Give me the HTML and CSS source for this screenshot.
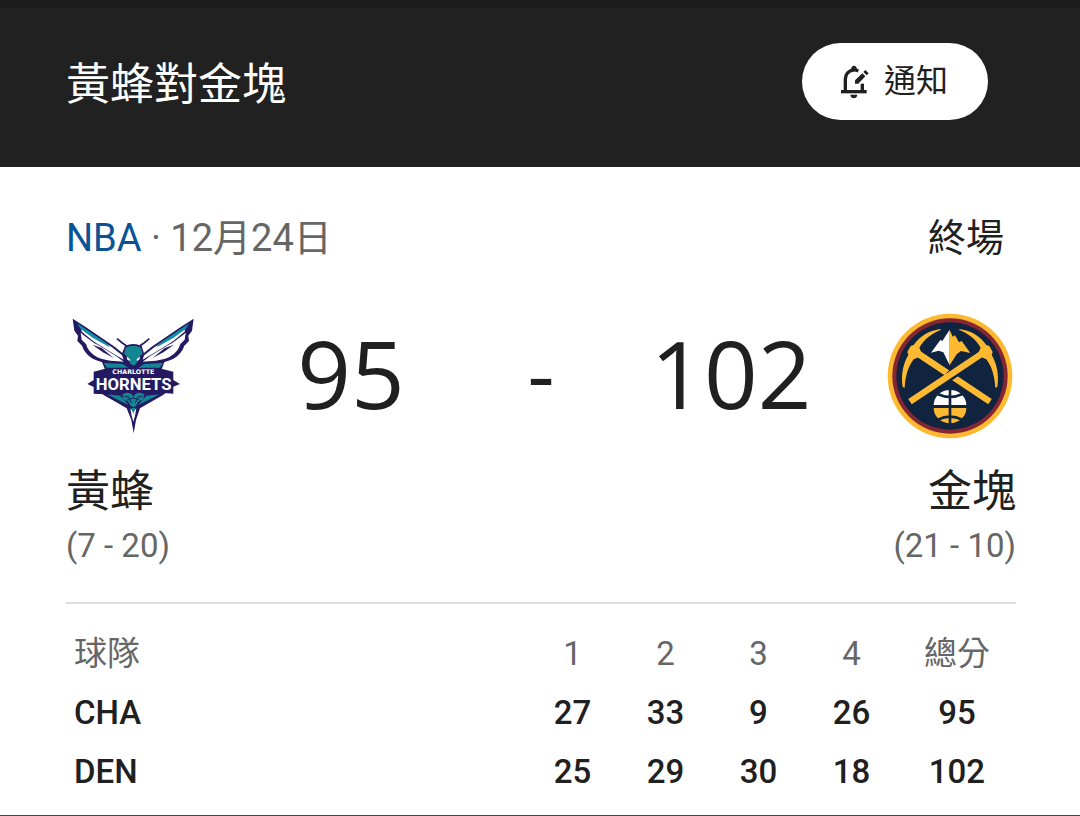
FILE: index.html
```html
<!DOCTYPE html>
<html lang="zh-Hant">
<head>
  <meta charset="UTF-8" />
  <meta name="viewport" content="width=device-width, initial-scale=1.0" />
  <title>黃蜂對金塊</title>
  <link rel="stylesheet" href="styles.css">
</head>
<body>
  <header class="top-bar">
    <h1>黃蜂對金塊</h1>
    <button class="notify-button" type="button">
      <svg class="bell" viewBox="150 105 87 102" aria-hidden="true">
        <g fill="none" stroke="#202020" stroke-width="10">
          <path d="M153 185H230" />
          <path d="M166 184V148C166 132 176 122 190 120C196 119 200 121 205 123" />
          <path d="M217 184V161" />
        </g>
        <path d="M183 119C183 103 201 103 201 119ZM181 194H202C201 208 182 208 181 194Z" fill="#202020" />
        <path d="M195 161V151L217 130L226 139L205 161ZM220 126L226 120L236 130L230 136Z" fill="#202020" />
      </svg>
      通知
    </button>
  </header>

  <main class="game">
    <div class="game-info">
      <p class="league"><a href="#">NBA</a> · 12月24日</p>
      <p class="status">終場</p>
    </div>

    <div class="match">
      <div class="logo">
        <svg class="hornets" viewBox="30 30 369 363" role="img" aria-label="黃蜂">
          <!-- wings -->
          <g id="wing">
            <path d="M35 38L75 64L162 123L198 152L200 178L150 173C106 168 74 153 63 119L49 105L51 89L40 74Z" fill="#241a62" />
            <path d="M59 80L68 84L110 116L165 150L188 167L148 164C107 159 84 143 75 114L62 101Z" fill="#fff" />
            <path d="M60 62L92 86L152 123L190 153L188 161L150 139L92 103L62 77Z" fill="#fff" />
            <path d="M48 52L84 76L140 114L146 124L96 96L60 70Z" fill="#128fa6" />
            <path d="M56 73L92 102L110 116L100 112L64 85Z" fill="#241a62" />
            <path d="M94 116L122 126L158 156L126 139Z" fill="#241a62" />
          </g>
          <use href="#wing" transform="matrix(-1 0 0 1 433 0)" />
          <!-- antennae and head -->
          <path d="M168 98L184 111L197 120M265 98L249 111L236 120" fill="none" stroke="#241a62" stroke-width="5" />
          <path d="M192 120Q217 108 242 120L250 145L243 168L311 166L300 195H134L122 166L190 168L182 145Z" fill="#241a62" />
          <path d="M194 125Q217 113 240 125L245 143L233 153L227 172L217 179L207 172L201 153L189 143Z" fill="#128793" />
          <path d="M197 151L207 160L206 165L199 161ZM237 151L227 160L228 165L235 161Z" fill="#fff" />
          <path d="M128 171L185 174L202 185H138ZM306 171L249 174L232 185H296Z" fill="#128793" />
          <!-- body and stinger -->
          <path d="M105 250H329L305 268L264 291L237 307L225 342L218 382L211 342L197 307L170 291L129 268Z" fill="#241a62" />
          <path d="M139 265L178 269L203 297L170 281ZM295 265L256 269L231 297L264 281Z" fill="#128793" />
          <path d="M184 266Q195 256 212 264L217 272L223 264Q238 256 250 266L246 281L233 286L225 300L217 304L209 300L201 286L188 281Z" fill="#128793" />
          <path d="M189 270L204 274L211 291M245 270L230 274L223 291M198 282L217 276L236 282" fill="none" stroke="#241a62" stroke-width="3" />
          <path d="M208 307L217 317L226 307L222 330L217 347L212 330Z" fill="#fff" />
          <path d="M211 306H223L217 324Z" fill="#128793" />
          <!-- name plate -->
          <path d="M98 197L141 186H292L337 197V222L357 234L337 242V263L301 260L260 258H168L130 265L98 263V243L79 234L98 222Z" fill="#241a62" />
          <text class="plate-city" x="217" y="205" text-anchor="middle">CHARLOTTE</text>
          <text class="plate-name" x="218" y="251" text-anchor="middle">HORNETS</text>
        </svg>
      </div>
      <p class="score">95</p>
      <p class="dash">-</p>
      <p class="score">102</p>
      <div class="logo">
        <svg class="nuggets" viewBox="21 24 378 378" role="img" aria-label="金塊">
          <circle cx="210" cy="213" r="187" fill="#fdb930" />
          <circle cx="210" cy="213" r="173" fill="#862633" />
          <circle cx="210" cy="213" r="161" fill="#10233f" />
          <!-- mountain -->
          <path d="M209 74L187 108L181 105L153 143L176 137L190 142L209 181Z" fill="#fff" />
          <path d="M209 74L218 95L225 91L237 112L245 108L271 144L243 138L230 148L209 181Z" fill="#fdb930" />
          <!-- pickaxes -->
          <g id="pickaxe">
            <path d="M182 72C150 76 122 91 101 120L92 123L82 141L85 149C70 176 62 208 68 246L74 248C76 214 84 186 101 163L115 157L126 146L118 128C132 104 153 87 182 75Z" fill="#fdb930" />
            <path d="M113 145L330 290" fill="none" stroke="#fdb930" stroke-width="19" />
          </g>
          <path d="M160 246L232 198" fill="none" stroke="#10233f" stroke-width="29" />
          <use href="#pickaxe" transform="matrix(-1 0 0 1 420 0)" />
          <path d="M113 145L200 203" fill="none" stroke="#fdb930" stroke-width="19" />
          <!-- ball -->
          <path d="M161 300A49 45 0 0 1 259 300Z" fill="#fff" />
          <path d="M161 309A49 46 0 0 0 259 309Z" fill="#fdb930" />
          <path d="M210 253V356M174 268Q210 284 246 268M174 344Q210 326 246 344" fill="none" stroke="#10233f" stroke-width="8" />
        </svg>
      </div>
    </div>

    <div class="teams">
      <div class="team">
        <h2>黃蜂</h2>
        <p>(7 - 20)</p>
      </div>
      <div class="team away">
        <h2>金塊</h2>
        <p>(21 - 10)</p>
      </div>
    </div>

    <table class="line-score">
      <thead>
        <tr>
          <th class="name" scope="col">球隊</th>
          <th scope="col">1</th>
          <th scope="col">2</th>
          <th scope="col">3</th>
          <th scope="col">4</th>
          <th class="total" scope="col">總分</th>
        </tr>
      </thead>
      <tbody>
        <tr>
          <th class="name" scope="row">CHA</th>
          <td>27</td>
          <td>33</td>
          <td>9</td>
          <td>26</td>
          <td>95</td>
        </tr>
        <tr>
          <th class="name" scope="row">DEN</th>
          <td>25</td>
          <td>29</td>
          <td>30</td>
          <td>18</td>
          <td>102</td>
        </tr>
      </tbody>
    </table>
  </main>
</body>
</html>
```

FILE: styles.css
```css
* {
  box-sizing: border-box;
}

body {
  font-family: Roboto, "Noto Sans CJK TC", sans-serif;
  background: #fff;
  color: #202020;
  margin: 0;
}

h1, h2, p {
  margin: 0;
  font-weight: 400;
}

.top-bar {
  display: flex;
  justify-content: space-between;
  align-items: center;
  background: linear-gradient(#1c1c1c 6px, #212121 9px);
  padding: 43px 92px 47px 66px;
}

h1 {
  padding-top: 6px;
  font-size: 44px;
  line-height: 56px;
  color: #fff;
}

.notify-button {
  display: flex;
  align-items: center;
  gap: 15px;
  height: 77px;
  padding: 0 40px 8px 38px;
  border: none;
  border-radius: 40px;
  background: #fff;
  color: #202020;
  font-family: inherit;
  font-size: 32px;
  cursor: pointer;
}

.bell {
  width: 29px;
  height: 34px;
  margin-top: 8px;
}

.game {
  padding: 47px 64px 14px 66px;
  border-bottom: 1px solid #444;
}

.game-info {
  display: flex;
  justify-content: space-between;
  padding-right: 12px;
  font-size: 38px;
  line-height: 48px;
}

.league {
  color: #666;
}

.league a {
  color: #0b5394;
  text-decoration: none;
}

.match {
  display: grid;
  grid-template-columns: 132px 1fr 74px 1fr 132px;
  align-items: center;
  margin-top: 51px;
  text-align: center;
}

.logo {
  display: flex;
  justify-content: center;
}

.hornets {
  width: 123px;
  height: 121px;
}

.nuggets {
  width: 126px;
  height: 126px;
}

.plate-city {
  font: bold 19px "DejaVu Sans", sans-serif;
  fill: #fff;
}

.plate-name {
  font: bold 50px Roboto, sans-serif;
  fill: #fff;
}

.score,
.dash {
  padding-bottom: 6px;
  font-family: "Open Sans", sans-serif;
  font-size: 94px;
  font-weight: 500;
  line-height: 120px;
}

.dash {
  font-size: 84px;
  font-weight: 400;
}

.teams {
  display: flex;
  justify-content: space-between;
  margin-top: 25px;
  padding-bottom: 36px;
  border-bottom: 2px solid #ddd;
}

.team h2 {
  font-size: 44px;
  line-height: 56px;
}

.team p {
  margin-top: 6px;
  font-size: 33px;
  line-height: 40px;
  color: #666;
}

.away {
  text-align: right;
}

.line-score {
  width: 100%;
  margin-top: 20px;
  border-collapse: collapse;
  table-layout: fixed;
  font-size: 33px;
  text-align: center;
}

.line-score th,
.line-score td {
  height: 59px;
  padding: 0;
  font-weight: 500;
  line-height: 40px;
}

.line-score th {
  width: 93px;
}

.line-score thead th {
  font-weight: 400;
  color: #666;
}

.line-score .name {
  width: auto;
  padding-left: 8px;
  text-align: left;
}

.line-score .total {
  width: 118px;
}
```
